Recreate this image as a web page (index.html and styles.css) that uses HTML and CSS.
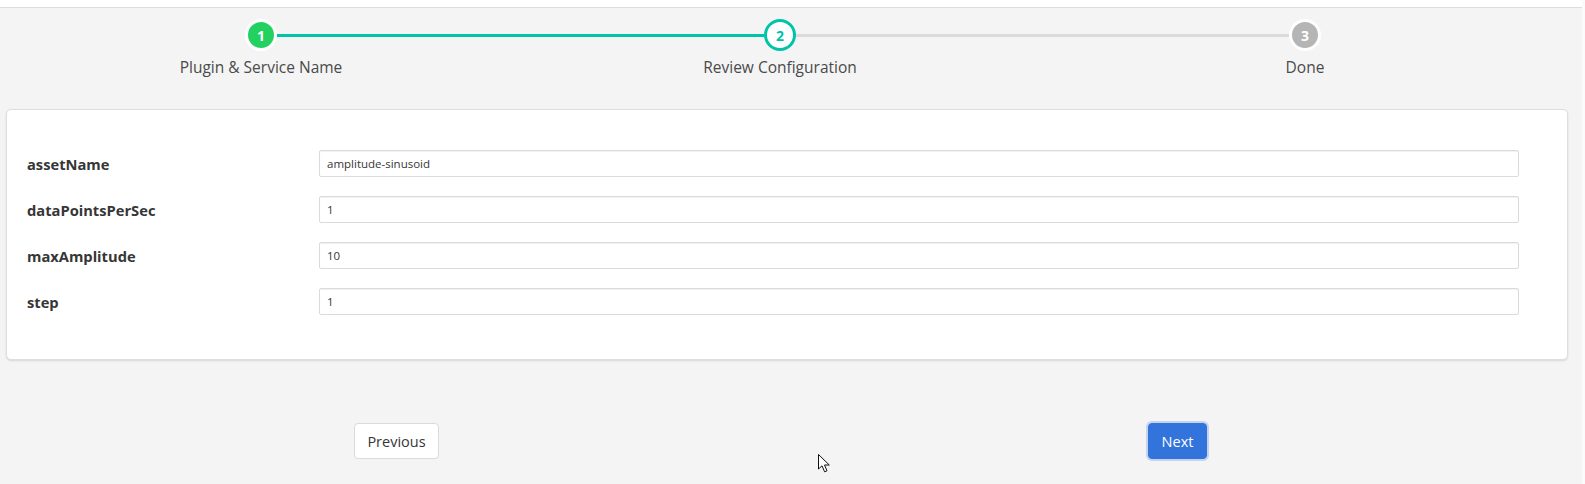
FILE: index.html
```html
<!DOCTYPE html>
<html lang="en">
<head>
<meta charset="utf-8">
<title>Add Service</title>
<link rel="stylesheet" href="styles.css">
</head>
<body>
<div class="page">
  <div class="topbar"></div>
  <div class="stepper">
    <div class="step done">
      <div class="dot">1</div>
      <div class="step-label">Plugin &amp; Service Name</div>
    </div>
    <div class="step active">
      <div class="dot">2</div>
      <div class="step-label">Review Configuration</div>
    </div>
    <div class="step todo">
      <div class="dot">3</div>
      <div class="step-label">Done</div>
    </div>
  </div>

  <div class="card">
    <div class="form-grid">
      <label class="field-label">assetName</label>
      <input class="field-input" type="text" value="amplitude-sinusoid">
      <label class="field-label">dataPointsPerSec</label>
      <input class="field-input" type="text" value="1">
      <label class="field-label">maxAmplitude</label>
      <input class="field-input" type="text" value="10">
      <label class="field-label">step</label>
      <input class="field-input" type="text" value="1">
    </div>
  </div>

  <div class="actions">
    <div class="action-col"><button class="btn btn-default">Previous</button></div>
    <div class="action-col"><button class="btn btn-primary">Next</button></div>
  </div>

  <svg class="cursor" width="13" height="20" viewBox="0 0 13 20">
    <path d="M0.5 0.5 L0.5 15 L4 11.8 L6.6 17.8 L9 16.8 L6.5 11 L11.3 11 Z" fill="#fff" stroke="#111" stroke-width="1" stroke-linejoin="miter"/>
  </svg>
</div>
</body>
</html>
```

FILE: styles.css
```css
html, body {
  margin: 0;
  padding: 0;
}
body {
  background: #fbfbfb;
  font-family: "Open Sans", "Noto Sans", "Liberation Sans", sans-serif;
  color: #4a4a4a;
}
.page {
  position: relative;
  width: calc(100% - 3px);
  height: 484px;
  background: #f4f4f4;
  overflow: hidden;
}
.topbar {
  height: 7px;
  background: #fff;
  border-bottom: 1px solid #dcdcdc;
}

/* Stepper */
.stepper {
  display: flex;
  padding: 11px 16px 32px 0;
}
.step {
  position: relative;
  flex: 1;
  display: flex;
  flex-direction: column;
  align-items: center;
}
.step.active {
  transform: translateX(-3px);
}
.step::after {
  content: "";
  position: absolute;
  top: 15px;
  left: calc(50% + 16px);
  width: calc(100% - 32px);
  height: 3px;
  background: #dbdbdb;
}
.step.done::after {
  background: #00c4a7;
  width: calc(100% - 35px);
}
.step.active::after {
  width: calc(100% - 29px);
}
.step.todo::after {
  display: none;
}
.dot {
  position: relative;
  z-index: 1;
  box-sizing: border-box;
  width: 32px;
  height: 32px;
  border-radius: 50%;
  border: 3px solid #fff;
  display: flex;
  align-items: center;
  justify-content: center;
  font-size: 14px;
  font-weight: 700;
  color: #fff;
}
.step.done .dot {
  background: #23d160;
}
.step.active .dot {
  background: #fff;
  border-color: #00c4a7;
  color: #00c4a7;
}
.step.todo .dot {
  background: #b5b5b5;
}
.step-label {
  margin-top: 6px;
  font-size: 15.5px;
  line-height: 20px;
  color: #4a4a4a;
}

/* Card */
.card {
  margin: 0 14px 0 6px;
  background: #fff;
  border: 1px solid #dedede;
  border-radius: 5px;
  box-shadow: 0 1px 2px rgba(10, 10, 10, 0.12);
  padding: 40px 48px 44px 20px;
}
.form-grid {
  display: grid;
  grid-template-columns: 292px 1fr;
  row-gap: 19px;
  align-items: center;
}
.field-label {
  font-size: 14.7px;
  font-weight: 700;
  color: #363636;
  line-height: 20px;
}
.field-input {
  box-sizing: border-box;
  height: 27px;
  width: 100%;
  margin: 0;
  padding: 0 7px;
  border: 1px solid #dbdbdb;
  border-radius: 2px;
  box-shadow: inset 0 1px 1px rgba(10, 10, 10, 0.06);
  background: #fff;
  font-family: "Open Sans", "Noto Sans", sans-serif;
  font-size: 11.5px;
  color: #363636;
  outline: none;
}

/* Actions */
.actions {
  display: flex;
  margin: 63px 14px 0 6px;
}
.action-col {
  flex: 1;
  display: flex;
  justify-content: center;
}
.btn {
  box-sizing: border-box;
  height: 36px;
  border-radius: 4px;
  font-family: "Open Sans", "Noto Sans", sans-serif;
  font-size: 14.5px;
  padding: 0 12px;
  cursor: pointer;
}
.btn-default {
  width: 85px;
  background: #fff;
  border: 1px solid #dbdbdb;
  color: #363636;
}
.btn-primary {
  width: 59px;
  background: #3273dc;
  border: 1px solid #3273dc;
  color: #fff;
  box-shadow: 0 0 0 2px rgba(50, 115, 220, 0.25);
}

.cursor {
  position: absolute;
  left: 818px;
  top: 454px;
}
```
